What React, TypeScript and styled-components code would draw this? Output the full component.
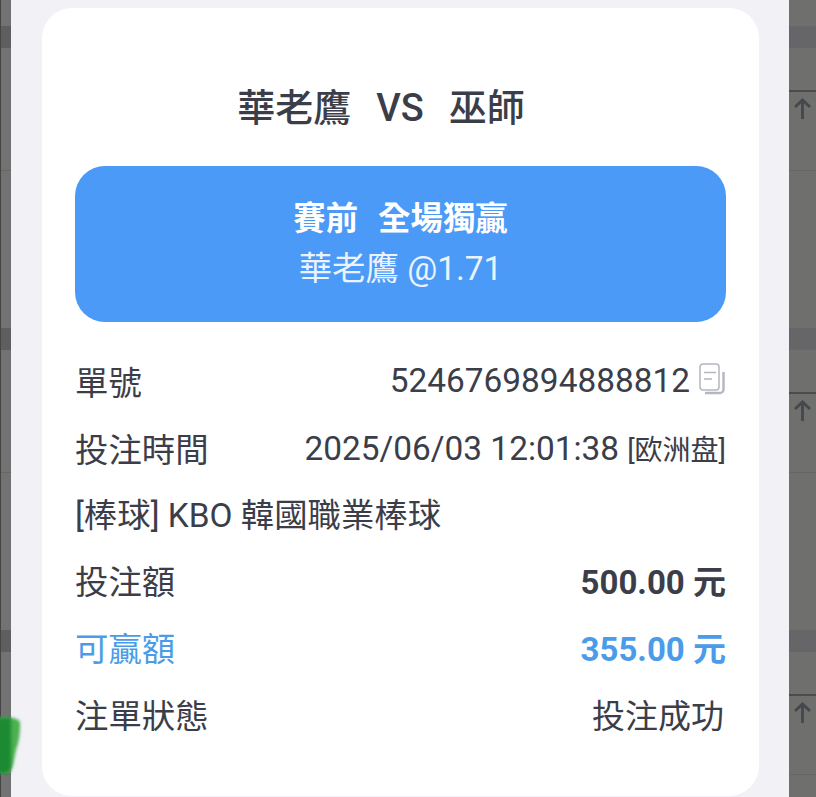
import React from "react";
import styled, { createGlobalStyle } from "styled-components";

const Global = createGlobalStyle`
  html, body { margin: 0; padding: 0; height: 100%; overflow: hidden; background: #6f6f6e; }
  #root { height: 100%; }
`;

const FONT = `Roboto, "Noto Sans CJK TC", sans-serif`;
const INK = "#3b3e49";

const Screen = styled.div`
  position: relative;
  width: 816px;
  height: 797px;
  overflow: hidden;
  display: flex;
  font-family: ${FONT};
  color: ${INK};
`;

const LeftGutter = styled.div`
  width: 11px;
  flex: none;
  box-sizing: border-box;
  border-left: 1px solid #454545;
  background: #727272;
  display: flex;
  flex-direction: column;
`;

const RightGutter = styled.div`
  width: 27px;
  flex: none;
  background: #6f6f6e;
  display: flex;
  flex-direction: column;
`;

const Group = styled.div`
  height: 302px;
  flex: none;
  display: flex;
  flex-direction: column;
`;

const TopGap = styled.div`
  height: 26px;
  flex: none;
`;

const Band = styled.div<{ $tone: string }>`
  height: 22px;
  flex: none;
  background: ${(p) => p.$tone};
`;

const Spacer = styled.div<{ $h: number }>`
  height: ${(p) => p.$h}px;
  flex: none;
`;

const Rule = styled.div`
  height: 2px;
  flex: none;
  background: #4a4c50;
`;

const ArrowSlot = styled.div`
  height: 78px;
  flex: none;
  box-sizing: border-box;
  padding: 6px 0 0 5px;
  color: #44474c;
`;

const FaintLine = styled.div`
  height: 1px;
  flex: none;
  background: #666665;
`;

const Sheet = styled.div`
  flex: 1;
  background: #f1f1f6;
  padding: 8px 30px 1px 31px;
  display: flex;
`;

const Card = styled.main`
  flex: 1;
  background: #fff;
  border-radius: 30px;
  padding: 69px 33px 0;
  display: flex;
  flex-direction: column;
`;

const Title = styled.h1`
  margin: 0;
  height: 62px;
  padding-right: 39px;
  display: flex;
  align-items: center;
  justify-content: center;
  gap: 25px;
  font-size: 38px;
  line-height: 62px;
  font-weight: 500;
  color: ${INK};
`;

const Highlight = styled.section`
  margin-top: 27px;
  height: 156px;
  border-radius: 30px;
  background: #4b9af7;
  color: #fff;
  display: flex;
  flex-direction: column;
  align-items: center;
  justify-content: center;
`;

const HighlightTitle = styled.div`
  display: flex;
  gap: 20px;
  font-size: 32.4px;
  line-height: 50px;
  font-weight: 700;
`;

const HighlightPick = styled.div`
  font-size: 33.4px;
  line-height: 50px;
  font-weight: 400;
  color: #eaf3fe;
`;

const Rows = styled.div`
  margin-top: 25px;
  display: flex;
  flex-direction: column;
`;

const Row = styled.div<{ $accent?: boolean }>`
  height: 67px;
  display: flex;
  align-items: center;
  justify-content: space-between;
  font-size: 33.4px;
  white-space: nowrap;
  color: ${(p) => (p.$accent ? "#4b9ce8" : INK)};
`;

const LeagueRow = styled(Row)`
  margin-top: -2px;
`;

const Strong = styled.span`
  font-weight: 700;
  font-size: 33px;
`;

const Small = styled.span`
  font-size: 28px;
  margin-left: 8px;
`;

const TrailingInset = styled.span`
  font-size: 33px;
  padding-right: 2px;
`;

const ValueWithIcon = styled.span`
  display: flex;
  align-items: center;
  gap: 9px;
`;

const CopyIcon = styled.svg`
  width: 26px;
  height: 32px;
  flex: none;
  color: #b4b7bf;
  margin: -4px 1px 0 0;
`;

const Smudge = styled.svg`
  position: absolute;
  left: 0;
  top: 712px;
  width: 30px;
  height: 72px;
`;

const Arrow = () => (
  <svg width="17" height="21" viewBox="0 0 17 21" fill="none" stroke="currentColor" strokeWidth="2.8" style={{ display: "block" }}>
    <path d="M8.5 21V2M1 9l7.5-7 7.5 7" />
  </svg>
);

const BackdropGroup = ({ showArrow, tone }: { showArrow?: boolean; tone: string }) => (
  <Group>
    <TopGap />
    <Band $tone={tone} />
    <Spacer $h={42} />
    {showArrow ? <Rule /> : <Spacer $h={2} />}
    <ArrowSlot>{showArrow ? <Arrow /> : null}</ArrowSlot>
    <FaintLine />
  </Group>
);

export default function App() {
  return (
    <Screen>
      <Global />
      <LeftGutter>
        <BackdropGroup tone="#5e5e5e" />
        <BackdropGroup tone="#5e5e5e" />
        <BackdropGroup tone="#5e5e5e" />
      </LeftGutter>
      <Sheet>
        <Card>
          <Title>
            <span>華老鷹</span>
            <span>VS</span>
            <span>巫師</span>
          </Title>
          <Highlight>
            <HighlightTitle>
              <span>賽前</span>
              <span>全場獨贏</span>
            </HighlightTitle>
            <HighlightPick>華老鷹 @1.71</HighlightPick>
          </Highlight>
          <Rows>
            <Row>
              <span>單號</span>
              <ValueWithIcon>
                <span>5246769894888812</span>
                <CopyIcon viewBox="0 0 26 32" fill="none" stroke="currentColor">
                  <path d="M4 1h13a3 3 0 0 1 3 3v20a3 3 0 0 1-3 3H4a3 3 0 0 1-3-3V4a3 3 0 0 1 3-3z" strokeWidth="1.5" />
                  <path d="M5 9.5h12M5 16h8" strokeWidth="1.5" />
                  <path d="M24.5 9v17.5a3.5 3.5 0 0 1-3.5 3.5H6" strokeWidth="2.4" />
                </CopyIcon>
              </ValueWithIcon>
            </Row>
            <Row>
              <span>投注時間</span>
              <span>
                2025/06/03 12:01:38<Small>[欧洲盘]</Small>
              </span>
            </Row>
            <LeagueRow>
              <span>[棒球] KBO 韓國職業棒球</span>
            </LeagueRow>
            <Row>
              <span>投注額</span>
              <Strong>500.00 元</Strong>
            </Row>
            <Row $accent>
              <span>可贏額</span>
              <Strong>355.00 元</Strong>
            </Row>
            <Row>
              <span>注單狀態</span>
              <TrailingInset>投注成功</TrailingInset>
            </Row>
          </Rows>
        </Card>
      </Sheet>
      <RightGutter>
        <BackdropGroup showArrow tone="#666668" />
        <BackdropGroup showArrow tone="#666668" />
        <BackdropGroup showArrow tone="#666668" />
      </RightGutter>
      <Smudge viewBox="0 0 30 72">
        <defs>
          <filter id="smudgeBlur" filterUnits="userSpaceOnUse" x="-20" y="-10" width="60" height="92">
            <feGaussianBlur stdDeviation="1.6" />
          </filter>
        </defs>
        <path d="M-12 6 C9 5 17 5 20 10 C20.5 20 19 30 16 38 L13 53 L10 61 L-12 62 Z" fill="#4cb050" filter="url(#smudgeBlur)" />
        <path d="M-12 6 H11 V55 L8 61 L-12 62 Z" fill="#1f8a30" filter="url(#smudgeBlur)" />
      </Smudge>
    </Screen>
  );
}
